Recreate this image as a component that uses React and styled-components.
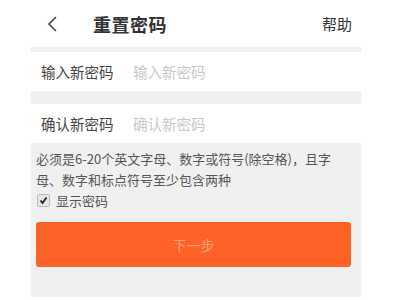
import React from "react";
import styled, { createGlobalStyle } from "styled-components";

const Global = createGlobalStyle`
  html, body { margin: 0; padding: 0; background: #fff; }
  body { font-family: "Noto Sans CJK SC", "Noto Sans", sans-serif; }
`;

const Page = styled.div`
  width: 330px;
  margin-left: 31px;
  height: 297px;
  display: flex;
  flex-direction: column;
  background: #f0f0f0;
`;

const Header = styled.div`
  height: 47px;
  background: #fff;
  display: flex;
  align-items: center;
  padding: 0 9px 0 15px;
  flex: none;
`;

const Back = styled.svg`
  width: 14px;
  height: 18px;
  flex: none;
`;

const Title = styled.div`
  margin-left: 33px;
  font-size: 18px;
  font-weight: 700;
  color: #333;
  flex: 1;
  letter-spacing: 0.5px;
`;

const Help = styled.div`
  font-size: 15px;
  color: #333;
`;

const Spacer = styled.div`
  height: ${(p) => p.h}px;
  flex: none;
`;

const Row = styled.div`
  height: 39px;
  flex: none;
  background: #fff;
  display: flex;
  align-items: center;
  padding-left: 10px;
  font-size: 14.5px;
`;

const Label = styled.span`
  color: #444;
  width: 92px;
`;

const Placeholder = styled.span`
  color: #c8c8c8;
`;

const Hint = styled.div`
  padding: 5px 12px 0 5px;
  font-size: 13px;
  line-height: 21px;
  color: #555;
`;

const CheckLine = styled.label`
  display: flex;
  align-items: center;
  gap: 6px;
  padding-left: 6px;
  font-size: 13px;
  color: #555;
  height: 21px;
`;

const Box = styled.span`
  width: 11px;
  height: 11px;
  border: 1px solid #bbb;
  border-radius: 2px;
  background: #e6e6e6;
  display: flex;
  align-items: center;
  justify-content: center;
`;

const Button = styled.div`
  margin: 11px 10px 0 5px;
  height: 45px;
  border-radius: 3px;
  background: #ff6227;
  color: #fca47b;
  font-size: 14px;
  display: flex;
  align-items: center;
  justify-content: center;
`;

export default function App() {
  return (
    <>
      <Global />
      <Page>
        <Header>
          <Back viewBox="0 0 14 18">
            <path d="M10 2 L3 9 L10 16" fill="none" stroke="#444" strokeWidth="1.6" />
          </Back>
          <Title>重置密码</Title>
          <Help>帮助</Help>
        </Header>
        <Spacer h={5} />
        <Row>
          <Label>输入新密码</Label>
          <Placeholder>输入新密码</Placeholder>
        </Row>
        <Spacer h={13} />
        <Row>
          <Label>确认新密码</Label>
          <Placeholder>确认新密码</Placeholder>
        </Row>
        <Hint>必须是6-20个英文字母、数字或符号(除空格)，且字母、数字和标点符号至少包含两种</Hint>
        <CheckLine>
          <Box>
            <svg width="9" height="9" viewBox="0 0 9 9">
              <path d="M1.5 4.5 L3.5 7 L7.5 1.5" fill="none" stroke="#222" strokeWidth="1.8" />
            </svg>
          </Box>
          显示密码
        </CheckLine>
        <Button>下一步</Button>
      </Page>
    </>
  );
}
